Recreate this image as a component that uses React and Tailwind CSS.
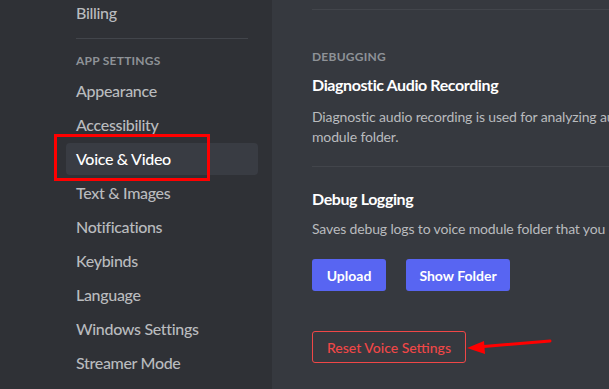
import React from "react";

const items = [
  "Appearance",
  "Accessibility",
  "Voice & Video",
  "Text & Images",
  "Notifications",
  "Keybinds",
  "Language",
  "Windows Settings",
  "Streamer Mode",
];

export default function App() {
  return (
    <div
      className="relative w-[609px] h-[389px] flex overflow-hidden bg-[#36393f]"
      style={{ fontFamily: "Lato, 'Noto Sans', sans-serif" }}
    >
      {/* sidebar */}
      <div className="w-[272px] shrink-0 bg-[#2f3136] pl-[66px] pr-[14px]">
        <div className="-mt-[3px] flex flex-col">
          <div className="h-[32px] mb-[2px] px-[10px] flex items-center text-[16px] font-medium tracking-[-0.02em] text-[#b9bbbe]">
            Billing
          </div>
          <div className="mt-[7px] mx-[10px] h-px bg-[#42454b]" />
          <div className="h-[36px] pt-[14px] px-[10px] text-[12px] leading-[16px] font-bold uppercase tracking-[0.02em] text-[#8e9297]">
            App Settings
          </div>
          {items.map((it) => (
            <div
              key={it}
              className={
                it === "Voice & Video"
                  ? "h-[32px] mb-[2px] px-[10px] flex items-center rounded-[4px] bg-[#393c43] text-[16px] font-medium tracking-[-0.02em] text-white"
                  : "h-[32px] mb-[2px] px-[10px] flex items-center text-[16px] font-medium tracking-[-0.02em] text-[#b9bbbe]"
              }
            >
              {it}
            </div>
          ))}
        </div>
      </div>

      {/* content */}
      <div className="flex-1 pl-[40px] pt-[9px] min-w-0">
        <div className="h-px bg-[#42454b]" />
        <div className="mt-[39px] text-[12px] leading-[16px] font-bold uppercase tracking-[0.02em] text-[#8e9297]">
          Debugging
        </div>
        <div className="mt-[10px] text-[16px] leading-[20px] font-bold tracking-[-0.025em] text-white">
          Diagnostic Audio Recording
        </div>
        <div className="mt-[12px] text-[14px] leading-[20px] tracking-[-0.01em] text-[#b9bbbe] whitespace-nowrap">
          Diagnostic audio recording is used for analyzing audio issues. The last five minutes of voice is saved to voice
          <br />
          module folder.
        </div>
        <div className="mt-[19px] h-px bg-[#42454b]" />
        <div className="mt-[22px] text-[16px] leading-[20px] font-bold tracking-[-0.025em] text-white">
          Debug Logging
        </div>
        <div className="mt-[10px] text-[14px] leading-[20px] tracking-[-0.01em] text-[#b9bbbe] whitespace-nowrap">
          Saves debug logs to voice module folder that you can upload for support.
        </div>
        <div className="mt-[20px] flex gap-[20px]">
          <button className="h-[32px] w-[74px] rounded-[3px] bg-[#5865f2] text-[14px] font-bold text-white">
            Upload
          </button>
          <button className="h-[32px] w-[104px] rounded-[3px] bg-[#5865f2] text-[14px] font-bold text-white">
            Show Folder
          </button>
        </div>
        <button className="mt-[40px] h-[32px] w-[154px] rounded-[3px] border border-[#f04747] text-[14px] font-medium text-[#f04747]">
          Reset Voice Settings
        </button>
      </div>

      {/* annotations */}
      <div className="absolute left-[54px] top-[134px] w-[156px] h-[47px] border-[3px] border-[#ff0000]" />
      <svg className="absolute left-[460px] top-[330px]" width="100" height="30" viewBox="0 0 100 30">
        <line x1="90" y1="11" x2="18" y2="17" stroke="#ff0000" strokeWidth="3" strokeLinecap="round" />
        <polygon points="7,18 24,11 25,24" fill="#ff0000" />
      </svg>
    </div>
  );
}
